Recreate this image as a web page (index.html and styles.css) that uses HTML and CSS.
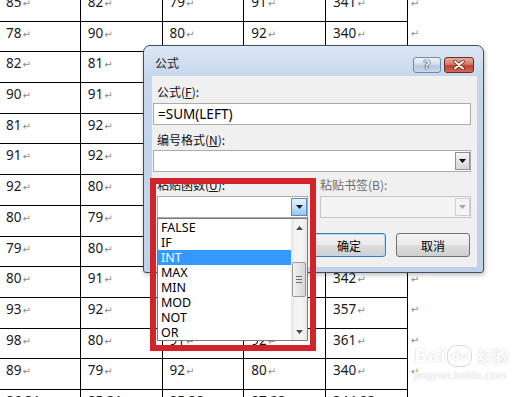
FILE: index.html
```html
<!DOCTYPE html>
<html>
  <head>
    <meta charset="utf-8">
    <title>公式</title>
    <link rel="stylesheet" href="styles.css">
  </head>
  <body>
    <table class="sheet">
      <colgroup><col class="c"><col class="c"><col class="c"><col class="c"><col class="c"><col class="e"></colgroup>
      <tr><td>85<i class="pm">↵</i></td><td>82<i class="pm">↵</i></td><td>79<i class="pm">↵</i></td><td>91<i class="pm">↵</i></td><td>341<i class="pm">↵</i></td><td class="eol"><i class="pm">↵</i></td></tr>
      <tr><td>78<i class="pm">↵</i></td><td>90<i class="pm">↵</i></td><td>80<i class="pm">↵</i></td><td>92<i class="pm">↵</i></td><td>340<i class="pm">↵</i></td><td class="eol"><i class="pm">↵</i></td></tr>
      <tr><td>82<i class="pm">↵</i></td><td>81<i class="pm">↵</i></td><td>80<i class="pm">↵</i></td><td>92<i class="pm">↵</i></td><td>335<i class="pm">↵</i></td><td class="eol"><i class="pm">↵</i></td></tr>
      <tr><td>90<i class="pm">↵</i></td><td>91<i class="pm">↵</i></td><td>82<i class="pm">↵</i></td><td>85<i class="pm">↵</i></td><td>348<i class="pm">↵</i></td><td class="eol"><i class="pm">↵</i></td></tr>
      <tr><td>81<i class="pm">↵</i></td><td>92<i class="pm">↵</i></td><td>79<i class="pm">↵</i></td><td>88<i class="pm">↵</i></td><td>340<i class="pm">↵</i></td><td class="eol"><i class="pm">↵</i></td></tr>
      <tr><td>91<i class="pm">↵</i></td><td>92<i class="pm">↵</i></td><td>86<i class="pm">↵</i></td><td>90<i class="pm">↵</i></td><td>359<i class="pm">↵</i></td><td class="eol"><i class="pm">↵</i></td></tr>
      <tr><td>92<i class="pm">↵</i></td><td>80<i class="pm">↵</i></td><td>85<i class="pm">↵</i></td><td>83<i class="pm">↵</i></td><td>340<i class="pm">↵</i></td><td class="eol"><i class="pm">↵</i></td></tr>
      <tr><td>80<i class="pm">↵</i></td><td>79<i class="pm">↵</i></td><td>88<i class="pm">↵</i></td><td>91<i class="pm">↵</i></td><td>338<i class="pm">↵</i></td><td class="eol"><i class="pm">↵</i></td></tr>
      <tr><td>79<i class="pm">↵</i></td><td>80<i class="pm">↵</i></td><td>90<i class="pm">↵</i></td><td>86<i class="pm">↵</i></td><td>335<i class="pm">↵</i></td><td class="eol"><i class="pm">↵</i></td></tr>
      <tr><td>80<i class="pm">↵</i></td><td>91<i class="pm">↵</i></td><td>89<i class="pm">↵</i></td><td>82<i class="pm">↵</i></td><td>342<i class="pm">↵</i></td><td class="eol"><i class="pm">↵</i></td></tr>
      <tr><td>93<i class="pm">↵</i></td><td>92<i class="pm">↵</i></td><td>86<i class="pm">↵</i></td><td>86<i class="pm">↵</i></td><td>357<i class="pm">↵</i></td><td class="eol"><i class="pm">↵</i></td></tr>
      <tr><td>98<i class="pm">↵</i></td><td>80<i class="pm">↵</i></td><td>91<i class="pm">↵</i></td><td>92<i class="pm">↵</i></td><td>361<i class="pm">↵</i></td><td class="eol"><i class="pm">↵</i></td></tr>
      <tr><td>89<i class="pm">↵</i></td><td>79<i class="pm">↵</i></td><td>92<i class="pm">↵</i></td><td>80<i class="pm">↵</i></td><td>340<i class="pm">↵</i></td><td class="eol"><i class="pm">↵</i></td></tr>
      <tr><td>86.31<i class="pm">↵</i></td><td>85.31<i class="pm">↵</i></td><td>85.38<i class="pm">↵</i></td><td>87.23<i class="pm">↵</i></td><td>344.23<i class="pm">↵</i></td><td class="eol"><i class="pm">↵</i></td></tr>
    </table>

    <div class="dialog">
      <div class="titlebar">
        <span class="title">公式</span>
        <div class="caption-btns">
          <span class="cap help">?</span>
          <span class="cap close">
            <svg width="14" height="10" viewBox="0 0 14 10"><path d="M3 1.5 L11 8.5 M11 1.5 L3 8.5" stroke="#5a1a12" stroke-width="3.4" stroke-linecap="round"/><path d="M3 1.5 L11 8.5 M11 1.5 L3 8.5" stroke="#fff" stroke-width="2" stroke-linecap="round"/></svg>
          </span>
        </div>
      </div>

      <div class="client">
        <div class="lbl first">公式(<u>F</u>):</div>
        <div class="field text">=SUM(LEFT)</div>
        <div class="lbl">编号格式(<u>N</u>):</div>
        <div class="field combo wide">
          <span class="drop"><svg width="7" height="4" viewBox="0 0 7 4"><path d="M0 0 H7 L3.5 4 Z" fill="#000"/></svg></span>
        </div>
        <div class="pair">
          <div class="col">
            <div class="lbl">粘贴函数(<u>U</u>):</div>
            <div class="field combo open">
              <span class="drop"><svg width="7" height="4" viewBox="0 0 7 4"><path d="M0 0 H7 L3.5 4 Z" fill="#0a1a2a"/></svg></span>
            </div>
          </div>
          <div class="col">
            <div class="lbl muted">粘贴书签(B):</div>
            <div class="field combo disabled">
              <span class="drop"><svg width="7" height="4" viewBox="0 0 7 4"><path d="M0 0 H7 L3.5 4 Z" fill="#a8a8a8"/></svg></span>
            </div>
          </div>
        </div>
        <div class="actions">
          <button class="btn default">确定</button>
          <button class="btn">取消</button>
        </div>
      </div>

      <div class="listbox">
        <ul class="items">
          <li>FALSE</li>
          <li>IF</li>
          <li class="sel">INT</li>
          <li>MAX</li>
          <li>MIN</li>
          <li>MOD</li>
          <li>NOT</li>
          <li>OR</li>
        </ul>
        <div class="scroll">
          <span class="sb-btn"><svg width="7" height="4" viewBox="0 0 7 4"><path d="M0 4 H7 L3.5 0 Z" fill="#4a4a4a"/></svg></span>
          <div class="track">
            <span class="thumb"><i></i><i></i><i></i></span>
          </div>
          <span class="sb-btn"><svg width="7" height="4" viewBox="0 0 7 4"><path d="M0 0 H7 L3.5 4 Z" fill="#4a4a4a"/></svg></span>
        </div>
      </div>
    </div>

    <div class="mark-box"></div>

    <div class="watermark">
      <div class="wm-logo">Bai<span class="paw">du</span><span class="wm-cn">经验</span></div>
      <div class="wm-url">jingyan.baidu.com</div>
    </div>
  </body>
</html>
```

FILE: styles.css
```css
:root {
  --frame: #c4d5eb;
  --client: #f0f0f0;
  --field-border: #a9abaf;
  --red: #d2232a;
  --select: #3399ff;
}

body {
  margin: 0;
  width: 521px;
  height: 397px;
  overflow: hidden;
  position: relative;
  background: #fff;
  font-family: "Noto Sans", "Noto Sans CJK SC", sans-serif;
  color: #000;
}

/* Word table behind the dialog */
.sheet {
  border-collapse: collapse;
  table-layout: fixed;
  margin: -10px 0 0 -2px;
  font-size: 13.5px;
  color: #1a1a1a;
}

.sheet col.c {
  width: 81.75px;
}

.sheet col.e {
  width: 20px;
}

.sheet tr {
  height: 30.7px;
}

.sheet td {
  border: 1px solid #000;
  padding: 2px 7px 0;
  vertical-align: top;
  line-height: 18px;
  white-space: nowrap;
}

.sheet td.eol {
  border: none;
  padding: 2px 2px 0;
}

.pm {
  font-family: "DejaVu Sans", sans-serif;
  font-style: normal;
  font-size: 10px;
  color: #8c8c8c;
  margin-left: 1px;
}

/* Dialog window */
.dialog {
  position: absolute;
  left: 143px;
  top: 45px;
  width: 341px;
  height: 228px;
  box-sizing: border-box;
  padding: 0 6px 5px 8px;
  border: 1px solid #3f4f63;
  border-radius: 7px 7px 3px 3px;
  background: linear-gradient(#dce7f4, #c6d7ec 30px, #bfd2ea);
  box-shadow: 1px 2px 4px rgba(0, 0, 0, 0.25);
  font-family: "Noto Sans CJK SC", "Noto Sans", sans-serif;
  font-size: 12px;
}

.titlebar {
  height: 30px;
  display: flex;
  justify-content: space-between;
  align-items: flex-start;
}

.title {
  margin: 9px 0 0 3px;
  line-height: 16px;
  color: #1b1b1b;
}

.caption-btns {
  display: flex;
  gap: 3px;
  margin: 11px 3px 0 0;
}

.cap {
  height: 16px;
  box-sizing: border-box;
  border-radius: 3px;
  display: flex;
  align-items: center;
  justify-content: center;
}

.cap.help {
  width: 28px;
  border: 1px solid #7488a3;
  background: linear-gradient(#eef3fa, #d3e0ef 45%, #b6cae2 55%, #c8d8ec);
  font-family: "DejaVu Sans", sans-serif;
  font-weight: bold;
  font-size: 13px;
  line-height: 14px;
  color: #e9eff7;
  text-shadow: 0 0 1px #22344c, 0 0 1px #22344c, 0 0 1px #22344c;
}

.cap.close {
  width: 30px;
  border: 1px solid #6e2b22;
  background: linear-gradient(#e8a99d, #d57a6b 45%, #c0402f 55%, #cf6a59);
}

.client {
  background: var(--client);
  height: 191px;
  box-sizing: border-box;
  padding-top: 8px;
  display: flex;
  flex-direction: column;
}

.lbl {
  line-height: 16px;
  padding-left: 5px;
  margin-top: 7px;
  color: #111;
}

.lbl.first {
  margin-top: 0;
}

.lbl.muted {
  color: #6d6d6d;
  padding-left: 0;
}

.field {
  height: 22px;
  box-sizing: border-box;
  background: #fff;
  border: 1px solid var(--field-border);
  margin-top: 3px;
}

.field.text,
.field.wide {
  margin-left: 1px;
  width: 318px;
}

.field.wide {
  margin-top: 2px;
}

.field.text {
  font-family: "Noto Sans", sans-serif;
  font-size: 13.5px;
  line-height: 20px;
  padding-left: 4px;
}

.combo {
  display: flex;
  justify-content: flex-end;
  align-items: stretch;
  padding: 1px 0 1px 1px;
}

.drop {
  width: 15px;
  box-sizing: border-box;
  border: 1px solid #8f8f8f;
  background: linear-gradient(#f6f6f6, #e4e4e4 50%, #d6d6d6);
  display: flex;
  align-items: center;
  justify-content: center;
}

.combo.open .drop {
  width: 16px;
  border-color: #5a8bbf;
  background: linear-gradient(#e6f2fc, #c4e0f8 50%, #95c4ee);
}

.combo.disabled {
  background: #f4f4f4;
  border-color: #c4c6c9;
}

.combo.disabled .drop {
  border-color: #cfcfcf;
  background: #f4f4f4;
}

.pair {
  display: flex;
  gap: 12px;
  padding-left: 5px;
  margin-top: -2px;
}

.pair .col {
  width: 151px;
  display: flex;
  flex-direction: column;
}

.pair .lbl {
  padding-left: 0;
}

.actions {
  display: flex;
  justify-content: flex-end;
  gap: 10px;
  padding-right: 7px;
  margin-top: 15px;
}

.btn {
  width: 74px;
  height: 24px;
  border: 1px solid #707070;
  border-radius: 3px;
  background: linear-gradient(#f3f3f3, #ebebeb 48%, #dddddd 52%, #cfcfcf);
  font-family: "Noto Sans CJK SC", sans-serif;
  font-size: 12px;
  color: #000;
  padding: 0;
}

.btn.default {
  border-color: #3c7fb1;
  box-shadow: inset 0 0 0 1px #b3dbf3;
}

/* Open drop-down list of the paste-function combo */
.listbox {
  position: absolute;
  left: 13px;
  top: 172px;
  width: 151px;
  box-sizing: border-box;
  border: 1px solid #7a7a7a;
  background: #fff;
  display: flex;
  z-index: 2;
}

.items {
  list-style: none;
  margin: 0;
  padding: 1px 0 0;
  flex: 1;
  font-family: "Noto Sans", sans-serif;
  font-size: 12.5px;
}

.items li {
  height: 15px;
  line-height: 15px;
  padding-left: 3px;
}

.items li.sel {
  background: var(--select);
  color: #f4fbff;
}

.scroll {
  width: 16px;
  display: flex;
  flex-direction: column;
  background: linear-gradient(90deg, #e6e6e6, #f4f4f4 30%, #f4f4f4 70%, #e6e6e6);
}

.sb-btn {
  height: 17px;
  display: flex;
  align-items: center;
  justify-content: center;
}

.track {
  flex: 1;
  padding-top: 26px;
}

.thumb {
  margin: 0 1px;
  height: 35px;
  box-sizing: border-box;
  border: 1px solid #9a9a9a;
  border-radius: 2px;
  background: linear-gradient(90deg, #f2f2f2, #e4e4e4 50%, #d6d6d6);
  display: flex;
  flex-direction: column;
  align-items: center;
  justify-content: center;
  gap: 2px;
}

.thumb i {
  width: 6px;
  height: 1px;
  background: #6a6a6a;
}

/* Red annotation box */
.mark-box {
  position: absolute;
  left: 150px;
  top: 178px;
  width: 166px;
  height: 173px;
  box-sizing: border-box;
  border: 6px solid var(--red);
  z-index: 3;
}

/* Faint site watermark */
.watermark {
  position: absolute;
  left: 414px;
  top: 346px;
  color: #fff;
  text-shadow: 0 0 1px #cfcfcf, 0 0 1px #cfcfcf;
}

.wm-logo {
  font-family: "DejaVu Sans", sans-serif;
  font-weight: bold;
  font-size: 18px;
  line-height: 20px;
  display: flex;
  align-items: center;
}

.paw {
  font-size: 12px;
  margin-left: 2px;
  padding: 0 3px;
  border-radius: 8px;
  box-shadow: 0 0 0 1px #d8d8d8;
}

.wm-cn {
  font-family: "Noto Sans CJK SC", sans-serif;
  font-size: 16px;
  margin-left: 6px;
}

.wm-url {
  font-family: "DejaVu Sans", sans-serif;
  font-size: 10px;
  line-height: 14px;
  margin-top: 3px;
}
```
